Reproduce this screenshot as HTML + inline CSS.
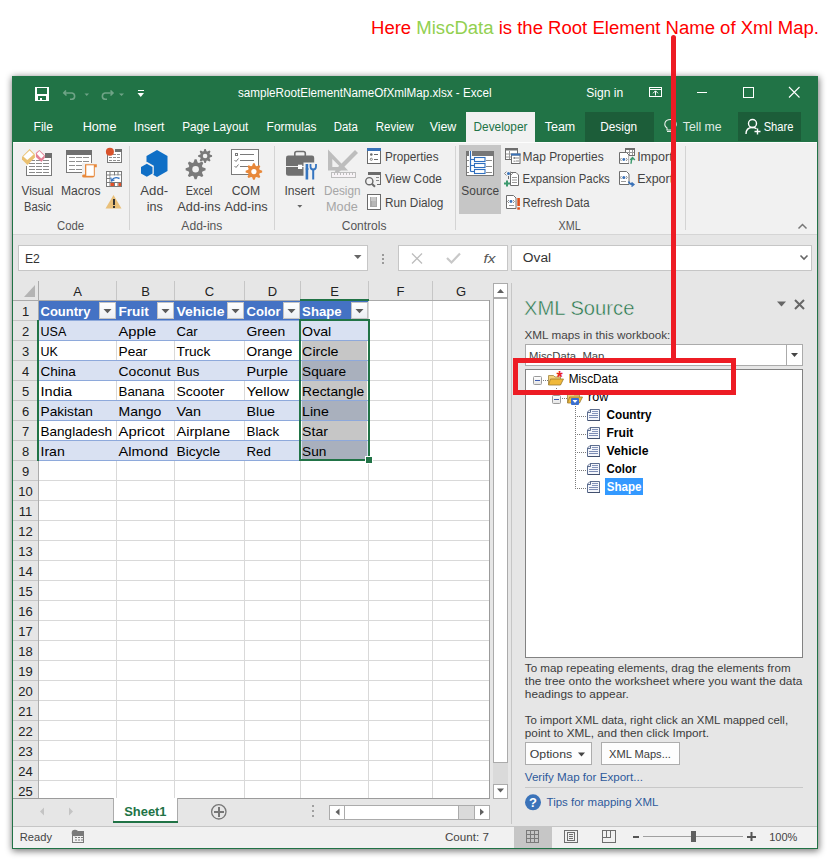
<!DOCTYPE html>
<html><head><meta charset="utf-8"><style>
html,body{margin:0;padding:0;background:#fff;width:835px;height:862px;overflow:hidden}
svg{display:block}
text{font-family:"Liberation Sans",sans-serif;white-space:pre}
</style></head><body>
<svg width="835" height="862" viewBox="0 0 835 862">
<defs><linearGradient id="mbox" x1="0" y1="0" x2="0" y2="1"><stop offset="0" stop-color="#ffffff"/><stop offset="1" stop-color="#e4e4e4"/></linearGradient><linearGradient id="fbtn" x1="0" y1="0" x2="0" y2="1"><stop offset="0" stop-color="#ffffff"/><stop offset="1" stop-color="#eceff3"/></linearGradient><filter id="sh" x="-5%" y="-5%" width="110%" height="110%"><feGaussianBlur stdDeviation="3.5"/></filter></defs>
<rect x="12" y="77" width="807" height="774" fill="#000" opacity="0.55" filter="url(#sh)"/>
<rect x="12" y="76" width="806" height="773" fill="#f1f1f1" />
<rect x="12" y="76" width="806" height="66" fill="#217346" />
<rect x="13" y="142" width="804" height="92" fill="#f1f1f1" />
<rect x="13" y="142" width="804" height="1" fill="#fdfdfd" />
<rect x="13" y="234" width="804" height="1" fill="#d5d5d5" />
<rect x="13" y="235" width="804" height="46" fill="#e6e6e6" />
<rect x="35" y="87" width="14" height="14" fill="#fff" />
<rect x="37" y="88" width="10" height="6" fill="#217346" />
<rect x="38" y="96" width="8" height="4" fill="#217346" />
<rect x="40" y="98" width="2" height="2" fill="#fff" />
<path d="M66 90.5 L63.8 93 L66.5 95.5 M64.5 93 H72 A3.2 3.2 0 0 1 72 99.3 H70" fill="none" stroke="#6fa487" stroke-width="1.6" />
<path d="M84.5 93.5 L89 93.5 L86.75 96 Z" fill="#6fa487" stroke="none" stroke-width="1" />
<path d="M110.5 90.5 L113 93 L110.5 95.5 M112.5 93 H105 A3.2 3.2 0 0 0 105 99.3 H107" fill="none" stroke="#6fa487" stroke-width="1.6" />
<path d="M119 93.5 L124 93.5 L121.5 96 Z" fill="#6fa487" stroke="none" stroke-width="1" />
<rect x="138" y="90" width="6" height="1" fill="#fff" />
<path d="M137.5 93 L144 93 L140.75 97 Z" fill="#fff" stroke="none" stroke-width="1" />
<text x="238" y="96.8" font-size="12.5" fill="#fff" textLength="253.5" lengthAdjust="spacingAndGlyphs" >sampleRootElementNameOfXmlMap.xlsx - Excel</text>
<text x="586.25" y="96.8" font-size="12.5" fill="#fff" textLength="36.9" lengthAdjust="spacingAndGlyphs" >Sign in</text>
<rect x="649" y="87" width="13" height="1" fill="#fff" />
<rect x="649" y="87" width="1" height="10" fill="#fff" />
<rect x="661" y="87" width="1" height="10" fill="#fff" />
<rect x="649" y="96" width="13" height="1" fill="#fff" />
<rect x="649" y="89" width="13" height="1" fill="#fff" />
<path d="M655.5 95.5 V91 M653 93.3 L655.5 90.8 L658 93.3" fill="none" stroke="#fff" stroke-width="1" />
<rect x="697" y="92" width="10" height="1" fill="#fff" />
<rect x="743" y="87" width="11" height="1" fill="#fff" />
<rect x="743" y="87" width="1" height="11" fill="#fff" />
<rect x="753" y="87" width="1" height="11" fill="#fff" />
<rect x="743" y="97" width="11" height="1" fill="#fff" />
<path d="M789 87 L799.5 97.5 M799.5 87 L789 97.5" fill="none" stroke="#fff" stroke-width="1.1" />
<rect x="466" y="112" width="69" height="30" fill="#f1f1f1" />
<rect x="585" y="112" width="69" height="30" fill="#1c5d39" />
<rect x="738" y="112" width="63" height="29" fill="#1c5d39" />
<text x="33.55" y="130.8" font-size="12.5" fill="#fff" textLength="19.4" lengthAdjust="spacingAndGlyphs" >File</text>
<text x="82.65" y="130.8" font-size="12.5" fill="#fff" textLength="33.8" lengthAdjust="spacingAndGlyphs" >Home</text>
<text x="133.85" y="130.8" font-size="12.5" fill="#fff" textLength="30.5" lengthAdjust="spacingAndGlyphs" >Insert</text>
<text x="182.15" y="130.8" font-size="12.5" fill="#fff" textLength="66.2" lengthAdjust="spacingAndGlyphs" >Page Layout</text>
<text x="266.55" y="130.8" font-size="12.5" fill="#fff" textLength="50.0" lengthAdjust="spacingAndGlyphs" >Formulas</text>
<text x="333.75" y="130.8" font-size="12.5" fill="#fff" textLength="24.1" lengthAdjust="spacingAndGlyphs" >Data</text>
<text x="375.75" y="130.8" font-size="12.5" fill="#fff" textLength="37.8" lengthAdjust="spacingAndGlyphs" >Review</text>
<text x="429.65" y="130.8" font-size="12.5" fill="#fff" textLength="26.7" lengthAdjust="spacingAndGlyphs" >View</text>
<text x="544.75" y="130.8" font-size="12.5" fill="#fff" textLength="30.5" lengthAdjust="spacingAndGlyphs" >Team</text>
<text x="600.25" y="130.8" font-size="12.5" fill="#fff" textLength="36.8" lengthAdjust="spacingAndGlyphs" >Design</text>
<text x="763.65" y="130.8" font-size="12.5" fill="#fff" textLength="29.8" lengthAdjust="spacingAndGlyphs" >Share</text>
<text x="473.55" y="130.8" font-size="12.5" fill="#217346" textLength="53.9" lengthAdjust="spacingAndGlyphs" >Developer</text>
<text x="682.75" y="130.8" font-size="12.5" fill="#dfeae3" textLength="38.9" lengthAdjust="spacingAndGlyphs" >Tell me</text>
<path d="M667 128 C663.5 125.5 664 119.5 670.5 119.5 C677 119.5 677.5 125.5 674 128 V130 H667 Z" fill="none" stroke="#e8efe9" stroke-width="1.1" />
<rect x="667" y="131" width="7" height="1" fill="#e8efe9" />
<circle cx="752.5" cy="123.5" r="4" fill="none" stroke="#fff" stroke-width="1.4"/>
<path d="M746 134 C746 129.5 749 127.5 752.5 127.5 C754 127.5 755.5 128 756.5 128.8" fill="none" stroke="#fff" stroke-width="1.4" />
<path d="M757.5 128.5 V134.5 M754.5 131.5 H760.5" fill="none" stroke="#fff" stroke-width="1.4" />
<rect x="129" y="146" width="1" height="84" fill="#d4d4d4" />
<rect x="274" y="146" width="1" height="84" fill="#d4d4d4" />
<rect x="455" y="146" width="1" height="84" fill="#d4d4d4" />
<rect x="685" y="146" width="1" height="84" fill="#d4d4d4" />
<text x="57.05" y="230" font-size="12.5" fill="#555" textLength="27.1" lengthAdjust="spacingAndGlyphs" >Code</text>
<text x="181.35" y="229.5" font-size="12.5" fill="#555" textLength="41.0" lengthAdjust="spacingAndGlyphs" >Add-ins</text>
<text x="341.75" y="229.5" font-size="12.5" fill="#555" textLength="44.7" lengthAdjust="spacingAndGlyphs" >Controls</text>
<text x="558.45" y="229.7" font-size="12.5" fill="#555" textLength="22.2" lengthAdjust="spacingAndGlyphs" >XML</text>
<path d="M798.5 228.5 L802.5 224.5 L806.5 228.5" fill="none" stroke="#777" stroke-width="1.5" />
<rect x="26" y="166" width="1" height="10" fill="#7a7a7a" />
<rect x="26" y="175" width="26" height="1" fill="#7a7a7a" />
<rect x="51" y="153" width="1" height="23" fill="#7a7a7a" />
<rect x="27" y="154" width="24" height="21" fill="#fff" />
<rect x="45" y="153" width="7" height="5" fill="#6e6e6e" />
<rect x="29" y="160" width="6" height="1" fill="#8a8a8a" />
<rect x="36" y="160" width="6" height="1" fill="#8a8a8a" />
<rect x="43" y="160" width="6" height="1" fill="#8a8a8a" />
<rect x="29" y="163" width="6" height="1" fill="#8a8a8a" />
<rect x="36" y="163" width="6" height="1" fill="#8a8a8a" />
<rect x="43" y="163" width="6" height="1" fill="#8a8a8a" />
<rect x="29" y="166" width="6" height="1" fill="#8a8a8a" />
<rect x="36" y="166" width="6" height="1" fill="#8a8a8a" />
<rect x="43" y="166" width="6" height="1" fill="#8a8a8a" />
<rect x="29" y="169" width="6" height="1" fill="#8a8a8a" />
<rect x="36" y="169" width="6" height="1" fill="#8a8a8a" />
<rect x="43" y="169" width="6" height="1" fill="#8a8a8a" />
<rect x="29" y="172" width="6" height="1" fill="#8a8a8a" />
<rect x="36" y="172" width="6" height="1" fill="#8a8a8a" />
<rect x="43" y="172" width="6" height="1" fill="#8a8a8a" />
<path d="M29.6 149.1 L34.9 154.6 L34.9 157.6 L27.5 164.9 L22 159.4 L22 156.8 Z" fill="#eac070" stroke="none" stroke-width="1" />
<path d="M29.6 150.6 L33.6 154.6 L27.3 160 L23.3 156.4 Z" fill="#fff" stroke="none" stroke-width="1" />
<path d="M39.3 149.9 L44.8 155.2 L44.8 157.8 L41.4 162.1 L35.9 157 L35.9 153.1 Z" fill="#e57f94" stroke="none" stroke-width="1" />
<path d="M39.3 150.9 L44 155.8 L41.2 158.4 L36.7 153.7 Z" fill="#fff" stroke="none" stroke-width="1" />
<text x="21.55" y="194.9" font-size="12.5" fill="#444" textLength="31.7" lengthAdjust="spacingAndGlyphs" >Visual</text>
<text x="24.05" y="211.2" font-size="12.5" fill="#444" textLength="27.3" lengthAdjust="spacingAndGlyphs" >Basic</text>
<rect x="66" y="150" width="26" height="23" fill="#7a7a7a" />
<rect x="67" y="155" width="24" height="17" fill="#fff" />
<rect x="66" y="150" width="26" height="5" fill="#707070" />
<rect x="69" y="157" width="6" height="1" fill="#8f8f8f" />
<rect x="76" y="157" width="6" height="1" fill="#8f8f8f" />
<rect x="83" y="157" width="6" height="1" fill="#8f8f8f" />
<rect x="69" y="161" width="6" height="1" fill="#8f8f8f" />
<rect x="76" y="161" width="6" height="1" fill="#8f8f8f" />
<rect x="83" y="161" width="6" height="1" fill="#8f8f8f" />
<rect x="69" y="165" width="6" height="1" fill="#8f8f8f" />
<rect x="76" y="165" width="6" height="1" fill="#8f8f8f" />
<rect x="83" y="165" width="6" height="1" fill="#8f8f8f" />
<rect x="69" y="169" width="6" height="1" fill="#8f8f8f" />
<rect x="76" y="169" width="6" height="1" fill="#8f8f8f" />
<rect x="83" y="169" width="6" height="1" fill="#8f8f8f" />
<rect x="82" y="163" width="16" height="16" fill="#f1f1f1" />
<path d="M85 164.2 H96.8 V167.2 H94.8 V175.5 Q94.8 177.6 92.6 177.6 H84 Q82.1 177.6 82.1 176 Q82.1 174.6 84 174.6 H85 Z" fill="#e8883a" stroke="none" stroke-width="1" />
<rect x="86.3" y="165.3" width="7.5" height="10.5" fill="#fff" />
<text x="60.95" y="194.9" font-size="12.5" fill="#444" textLength="39.7" lengthAdjust="spacingAndGlyphs" >Macros</text>
<rect x="107" y="162" width="15" height="1" fill="#7a7a7a" />
<rect x="121" y="149" width="1" height="14" fill="#7a7a7a" />
<rect x="107" y="155" width="1" height="8" fill="#7a7a7a" />
<rect x="108" y="152" width="13" height="10" fill="#fff" />
<rect x="115" y="149" width="7" height="3" fill="#707070" />
<rect x="109" y="154" width="3" height="1" fill="#8f8f8f" />
<rect x="113" y="154" width="3" height="1" fill="#8f8f8f" />
<rect x="117" y="154" width="3" height="1" fill="#8f8f8f" />
<rect x="109" y="157" width="3" height="1" fill="#8f8f8f" />
<rect x="113" y="157" width="3" height="1" fill="#8f8f8f" />
<rect x="117" y="157" width="3" height="1" fill="#8f8f8f" />
<rect x="109" y="160" width="3" height="1" fill="#8f8f8f" />
<rect x="113" y="160" width="3" height="1" fill="#8f8f8f" />
<rect x="117" y="160" width="3" height="1" fill="#8f8f8f" />
<circle cx="109.9" cy="151.7" r="4" fill="#d9522b"/>
<rect x="106" y="171" width="16" height="16" fill="#7a7a7a" />
<rect x="107" y="172" width="14" height="14" fill="#fff" />
<rect x="109.5" y="171" width="1" height="16" fill="#7a7a7a" />
<rect x="114" y="171" width="1" height="16" fill="#7a7a7a" />
<rect x="117.5" y="171" width="1" height="16" fill="#7a7a7a" />
<rect x="106" y="174.5" width="16" height="1" fill="#7a7a7a" />
<rect x="106" y="178" width="16" height="1" fill="#7a7a7a" />
<rect x="106" y="182" width="16" height="1" fill="#7a7a7a" />
<rect x="110.5" y="175.5" width="10.5" height="6.5" fill="#fff" />
<rect x="110.5" y="183" width="3.5" height="3" fill="#e0502a" />
<rect x="118.5" y="183" width="2.5" height="3" fill="#e0502a" />
<path d="M112 180 Q114.5 176.2 119.5 178.5" fill="none" stroke="#2f6fbf" stroke-width="1.4" />
<path d="M110.8 177.5 L111.5 181 L114.5 180" fill="none" stroke="#2f6fbf" stroke-width="1.2" />
<path d="M113.5 195 L121.5 208.5 L105.5 208.5 Z" fill="#e9c07a" stroke="none" stroke-width="1" />
<rect x="113" y="199" width="2" height="6" fill="#333" />
<rect x="113" y="206" width="2" height="2" fill="#333" />
<path d="M157 150 L167.5 156 L167.5 171 L157 177 L146.5 171 L146.5 156 Z" fill="#0f6fc6" stroke="none" stroke-width="1" />
<path d="M146.8 161.8 L153.8 165.8 L153.8 174.2 L146.8 178.2 L139.8 174.2 L139.8 165.8 Z" fill="#f1f1f1" stroke="none" stroke-width="1" />
<path d="M146.8 163.8 L152.5 167 L152.5 173.5 L146.8 176.8 L141 173.5 L141 167 Z" fill="#0f6fc6" stroke="none" stroke-width="1" />
<text x="140.35" y="195" font-size="12.5" fill="#444" textLength="27.8" lengthAdjust="spacingAndGlyphs" >Add-</text>
<text x="146.65" y="211.4" font-size="12.5" fill="#444" textLength="16.1" lengthAdjust="spacingAndGlyphs" >ins</text>
<path d="M194.62 159.35 L196.58 159.35 L197.69 162.41 L198.99 162.95 L201.94 161.57 L203.33 162.96 L201.95 165.91 L202.49 167.21 L205.55 168.32 L205.55 170.28 L202.49 171.39 L201.95 172.69 L203.33 175.64 L201.94 177.03 L198.99 175.65 L197.69 176.19 L196.58 179.25 L194.62 179.25 L193.51 176.19 L192.21 175.65 L189.26 177.03 L187.87 175.64 L189.25 172.69 L188.71 171.39 L185.65 170.28 L185.65 168.32 L188.71 167.21 L189.25 165.91 L187.87 162.96 L189.26 161.57 L192.21 162.95 L193.51 162.41 Z" fill="#7a7a7a" stroke="none" stroke-width="1" />
<circle cx="195.6" cy="169.3" r="3.3" fill="#f1f1f1"/>
<path d="M204.41 149.03 L205.79 149.03 L206.55 151.22 L207.46 151.59 L209.54 150.59 L210.51 151.56 L209.51 153.64 L209.88 154.55 L212.07 155.31 L212.07 156.69 L209.88 157.45 L209.51 158.36 L210.51 160.44 L209.54 161.41 L207.46 160.41 L206.55 160.78 L205.79 162.97 L204.41 162.97 L203.65 160.78 L202.74 160.41 L200.66 161.41 L199.69 160.44 L200.69 158.36 L200.32 157.45 L198.13 156.69 L198.13 155.31 L200.32 154.55 L200.69 153.64 L199.69 151.56 L200.66 150.59 L202.74 151.59 L203.65 151.22 Z" fill="#7a7a7a" stroke="none" stroke-width="1" />
<circle cx="205.1" cy="156" r="2.3" fill="#f1f1f1"/>
<text x="185.85" y="195" font-size="12.5" fill="#444" textLength="26.6" lengthAdjust="spacingAndGlyphs" >Excel</text>
<text x="177.35" y="211.4" font-size="12.5" fill="#444" textLength="43.2" lengthAdjust="spacingAndGlyphs" >Add-ins</text>
<rect x="231" y="149" width="28" height="26" fill="#7a7a7a" />
<rect x="232" y="150" width="26" height="24" fill="#fff" />
<rect x="235" y="153" width="3" height="3" fill="#7a7a7a" />
<rect x="236" y="154" width="1" height="1" fill="#fff" />
<rect x="240" y="154" width="14" height="1" fill="#7a7a7a" />
<rect x="240" y="160" width="14" height="1" fill="#7a7a7a" />
<rect x="240" y="166" width="8" height="1" fill="#7a7a7a" />
<path d="M234.5 160 L236 161.5 L238.5 158.5" fill="none" stroke="#7a7a7a" stroke-width="1" />
<path d="M234.5 166 L236 167.5 L238.5 164.5" fill="none" stroke="#7a7a7a" stroke-width="1" />
<path d="M253.09 163.34 L254.71 163.34 L255.64 165.86 L256.73 166.31 L259.17 165.18 L260.32 166.33 L259.19 168.77 L259.64 169.86 L262.16 170.79 L262.16 172.41 L259.64 173.34 L259.19 174.43 L260.32 176.87 L259.17 178.02 L256.73 176.89 L255.64 177.34 L254.71 179.86 L253.09 179.86 L252.16 177.34 L251.07 176.89 L248.63 178.02 L247.48 176.87 L248.61 174.43 L248.16 173.34 L245.64 172.41 L245.64 170.79 L248.16 169.86 L248.61 168.77 L247.48 166.33 L248.63 165.18 L251.07 166.31 L252.16 165.86 Z" fill="#e8883a" stroke="none" stroke-width="1" />
<circle cx="253.9" cy="171.6" r="2.6" fill="#fff"/>
<text x="231.65" y="195" font-size="12.5" fill="#444" textLength="28.4" lengthAdjust="spacingAndGlyphs" >COM</text>
<text x="224.45" y="211.4" font-size="12.5" fill="#444" textLength="43.2" lengthAdjust="spacingAndGlyphs" >Add-ins</text>
<rect x="294.8" y="151.5" width="10.5" height="6" rx="2" fill="none" stroke="#707070" stroke-width="1.6"/>
<rect x="286" y="155.6" width="28.2" height="20.1" rx="2.2" fill="#707070"/>
<rect x="286" y="166" width="18" height="1" fill="#f1f1f1" />
<rect x="298" y="164.7" width="4.2" height="4.3" fill="#fff" />
<rect x="303.5" y="162.5" width="14" height="18" fill="#f1f1f1" />
<path d="M306.9 164 V168 M306.9 170 V179.5" fill="none" stroke="#3575c0" stroke-width="2.6" />
<rect x="305.5" y="168" width="3" height="2" fill="#3575c0" />
<path d="M313.2 169 V179.5" fill="none" stroke="#3575c0" stroke-width="2" />
<path d="M310.5 164 V166.5 Q310.5 169.5 313.2 169.5 Q316 169.5 316 166.5 V164" fill="none" stroke="#3575c0" stroke-width="1.8" />
<text x="284.45" y="194.8" font-size="12.5" fill="#444" textLength="30.2" lengthAdjust="spacingAndGlyphs" >Insert</text>
<path d="M297.3 205 L302.3 205 L299.8 207.8 Z" fill="#666" stroke="none" stroke-width="1" />
<path d="M328 149.4 V170.4 H348.1 Z M332.3 159 V167 H340.3 Z" fill="#bdbdbd" stroke="none" stroke-width="1" fill-rule="evenodd"/>
<path d="M335.6 169.5 L355 150 L358 153 L338.6 172.5 L334.5 173.5 Z" fill="#bdbdbd" stroke="none" stroke-width="1" />
<rect x="331" y="172" width="25" height="6" fill="#bdbdbd" />
<rect x="332" y="173" width="23" height="4" fill="#f7f3f6" />
<rect x="334" y="173" width="1" height="2" fill="#bdbdbd" />
<rect x="337" y="173" width="1" height="2" fill="#bdbdbd" />
<rect x="340" y="173" width="1" height="2" fill="#bdbdbd" />
<rect x="343" y="173" width="1" height="2" fill="#bdbdbd" />
<rect x="346" y="173" width="1" height="2" fill="#bdbdbd" />
<rect x="349" y="173" width="1" height="2" fill="#bdbdbd" />
<rect x="352" y="173" width="1" height="2" fill="#bdbdbd" />
<text x="323.95" y="194.8" font-size="12.5" fill="#a6a6a6" textLength="36.6" lengthAdjust="spacingAndGlyphs" >Design</text>
<text x="326.05" y="210.8" font-size="12.5" fill="#a6a6a6" textLength="31.7" lengthAdjust="spacingAndGlyphs" >Mode</text>
<rect x="367" y="148" width="14" height="16" fill="#6a6a6a" />
<rect x="368" y="151" width="12" height="12" fill="#fff" />
<rect x="367" y="148" width="14" height="3" fill="#3a72b8" />
<circle cx="371.3" cy="154.5" r="1.3" fill="#6a6a6a"/><circle cx="371.3" cy="159.3" r="1.1" fill="none" stroke="#6a6a6a" stroke-width="0.8"/>
<rect x="374" y="154" width="4" height="1" fill="#6a6a6a" />
<rect x="374" y="159" width="4" height="1" fill="#6a6a6a" />
<text x="384.95" y="161" font-size="12.5" fill="#444" textLength="53.6" lengthAdjust="spacingAndGlyphs" >Properties</text>
<rect x="368" y="172" width="13" height="3" fill="#6a6a6a" />
<rect x="380" y="172" width="1" height="13" fill="#6a6a6a" />
<rect x="377" y="184" width="4" height="1" fill="#6a6a6a" />
<rect x="376" y="177" width="3" height="1" fill="#8a8a8a" />
<rect x="376" y="180" width="3" height="1" fill="#8a8a8a" />
<circle cx="369.3" cy="181.2" r="3.6" fill="none" stroke="#6a6a6a" stroke-width="1.4"/>
<path d="M371.8 183.8 L375 186.8" fill="none" stroke="#6a6a6a" stroke-width="2" />
<text x="384.95" y="183.4" font-size="12.5" fill="#444" textLength="56.9" lengthAdjust="spacingAndGlyphs" >View Code</text>
<rect x="367" y="194" width="14" height="16" fill="#6a6a6a" />
<rect x="368" y="195" width="12" height="14" fill="#fff" />
<rect x="370" y="197" width="7" height="10" fill="#a8a8a8" />
<rect x="371" y="197" width="5" height="4" fill="#c8c8c8" />
<rect x="372" y="201" width="4" height="5" fill="#b8b8b8" />
<text x="384.95" y="206.7" font-size="12.5" fill="#444" textLength="58.4" lengthAdjust="spacingAndGlyphs" >Run Dialog</text>
<rect x="459" y="145" width="42" height="69" fill="#c6c6c6" />
<rect x="466" y="151" width="28" height="25" fill="#777" />
<rect x="467" y="156" width="26" height="19" fill="#fff" />
<rect x="469" y="151" width="3" height="5" fill="#fff" />
<path d="M470.5 151 V171.5" fill="none" stroke="#2f6fbf" stroke-width="1.2" />
<rect x="474.5" y="157.5" width="10.5" height="4" fill="#fff" stroke="#2f6fbf" stroke-width="1.1"/>
<path d="M470.5 159.5 H474.5" fill="none" stroke="#2f6fbf" stroke-width="1.1" />
<rect x="467" y="160.0" width="2" height="1" fill="#8a8a8a" />
<rect x="486" y="160.0" width="6" height="1" fill="#8a8a8a" />
<rect x="474.5" y="163.5" width="10.5" height="4" fill="#fff" stroke="#2f6fbf" stroke-width="1.1"/>
<path d="M470.5 165.5 H474.5" fill="none" stroke="#2f6fbf" stroke-width="1.1" />
<rect x="467" y="166.0" width="2" height="1" fill="#8a8a8a" />
<rect x="486" y="166.0" width="6" height="1" fill="#8a8a8a" />
<rect x="474.5" y="169.5" width="10.5" height="4" fill="#fff" stroke="#2f6fbf" stroke-width="1.1"/>
<path d="M470.5 171.5 H474.5" fill="none" stroke="#2f6fbf" stroke-width="1.1" />
<rect x="467" y="172.0" width="2" height="1" fill="#8a8a8a" />
<rect x="486" y="172.0" width="6" height="1" fill="#8a8a8a" />
<text x="461.35" y="195.2" font-size="12.5" fill="#444" textLength="37.7" lengthAdjust="spacingAndGlyphs" >Source</text>
<rect x="505" y="148" width="13" height="12" fill="#6e6e6e" />
<rect x="506" y="150.5" width="11" height="8.5" fill="#fff" />
<rect x="509" y="151" width="1" height="8" fill="#9a9a9a" />
<rect x="506" y="153.5" width="5" height="1" fill="#9a9a9a" />
<rect x="506" y="156.5" width="5" height="1" fill="#9a9a9a" />
<rect x="511" y="153.5" width="9.5" height="10.5" fill="#6e6e6e" />
<rect x="512" y="155.5" width="7.5" height="7.5" fill="#fff" />
<rect x="511" y="153.5" width="9.5" height="2" fill="#3a72b8" />
<rect x="513.5" y="157" width="2" height="2" fill="#8a8a8a" />
<rect x="516" y="157.5" width="3" height="1" fill="#8a8a8a" />
<rect x="513.5" y="160.5" width="2" height="1.5" fill="#b0b0b0" />
<rect x="516" y="160.5" width="3" height="1" fill="#8a8a8a" />
<text x="522.55" y="160.7" font-size="12.5" fill="#444" textLength="81.1" lengthAdjust="spacingAndGlyphs" >Map Properties</text>
<path d="M510.5 172.5 H516 L518.5 175 V185.5 H510.5 Z" fill="#fff" stroke="#6e6e6e" stroke-width="1" />
<rect x="512" y="177.0" width="5" height="1" fill="#9a9a9a" />
<rect x="512" y="179.5" width="5" height="1" fill="#9a9a9a" />
<rect x="512" y="182.0" width="5" height="1" fill="#9a9a9a" />
<path d="M506.5 171.5 L504.5 173.5 L506.5 175.5 M510.5 171.5 L512.5 173.5 L510.5 175.5" fill="none" stroke="#6e6e6e" stroke-width="0.8" />
<circle cx="508.5" cy="173.5" r="1.5" fill="#3a72b8"/>
<rect x="508" y="176" width="1" height="3" fill="#6e6e6e" />
<path d="M507 180.5 V186.5 M504 183.5 H510" fill="none" stroke="#3d9a6e" stroke-width="2" />
<text x="522.55" y="183.4" font-size="12.5" fill="#444" textLength="87.2" lengthAdjust="spacingAndGlyphs" >Expansion Packs</text>
<path d="M506.5 195.5 H513.5 L516 198 V208.5 H506.5 Z" fill="#fff" stroke="#6e6e6e" stroke-width="1" />
<path d="M509 200 L507.5 201.5 L509 203 M513 200 L514.5 201.5 L513 203" fill="none" stroke="#6e6e6e" stroke-width="0.8" />
<circle cx="511" cy="201.5" r="1.4" fill="#3a72b8"/>
<rect x="509" y="205" width="5" height="1" fill="#9a9a9a" />
<rect x="517.3" y="198" width="2.6" height="8" fill="#e0501c" />
<rect x="517.3" y="207.3" width="2.6" height="2.4" fill="#e0501c" />
<text x="522.55" y="206.7" font-size="12.5" fill="#444" textLength="67.0" lengthAdjust="spacingAndGlyphs" >Refresh Data</text>
<rect x="625" y="148" width="10" height="8" fill="#6e6e6e" />
<rect x="626" y="150" width="8" height="5" fill="#fff" />
<rect x="626" y="152" width="8" height="1" fill="#9a9a9a" />
<rect x="629" y="150" width="1" height="5" fill="#9a9a9a" />
<rect x="632" y="150" width="1" height="5" fill="#9a9a9a" />
<path d="M619.5 152.5 H626.5 L629 155 V163.5 H619.5 Z" fill="#fff" stroke="#6e6e6e" stroke-width="1" />
<path d="M621.5 158 L620.3 159.5 L621.5 161 M626 158 L627.2 159.5 L626 161" fill="none" stroke="#6e6e6e" stroke-width="0.8" />
<circle cx="623.8" cy="159.5" r="1.4" fill="#3a72b8"/>
<rect x="629" y="156" width="7" height="9" fill="#f1f1f1" />
<path d="M631 163.8 Q631 160 632.5 158.5 M630.3 160 L632.5 157.5 L634.8 160" fill="none" stroke="#3d9a6e" stroke-width="1.5" />
<text x="637.15" y="160.7" font-size="12.5" fill="#444" textLength="35.5" lengthAdjust="spacingAndGlyphs" >Import</text>
<path d="M619.5 171.5 H626.5 L629 174 V184.5 H619.5 Z" fill="#fff" stroke="#6e6e6e" stroke-width="1" />
<path d="M621.5 176 L620.3 177.5 L621.5 179 M626 176 L627.2 177.5 L626 179" fill="none" stroke="#6e6e6e" stroke-width="0.8" />
<circle cx="623.8" cy="177.5" r="1.5" fill="#3a72b8"/>
<rect x="621" y="181" width="5" height="1" fill="#9a9a9a" />
<rect x="629.5" y="182" width="6" height="6" fill="#f1f1f1" />
<path d="M628.5 181.5 Q629.5 184.5 633 184.5 M631.5 182.5 L633.8 184.5 L631.5 186.5" fill="none" stroke="#3a72b8" stroke-width="1.6" />
<text x="637.15" y="183.4" font-size="12.5" fill="#444" textLength="36.0" lengthAdjust="spacingAndGlyphs" >Export</text>
<rect x="18" y="245" width="350" height="26" fill="#c6c6c6" />
<rect x="19" y="246" width="348" height="24" fill="#fff" />
<text x="24.95" y="263" font-size="12.5" fill="#333" textLength="14.9" lengthAdjust="spacingAndGlyphs" >E2</text>
<path d="M354 255 L361.5 255 L357.75 259 Z" fill="#666" stroke="none" stroke-width="1" />
<rect x="382" y="254" width="2" height="2" fill="#9a9a9a" />
<rect x="382" y="258" width="2" height="2" fill="#9a9a9a" />
<rect x="382" y="262" width="2" height="2" fill="#9a9a9a" />
<rect x="398" y="245" width="110" height="26" fill="#c6c6c6" />
<rect x="399" y="246" width="108" height="24" fill="#fff" />
<path d="M412 253.5 L422 263.5 M422 253.5 L412 263.5" fill="none" stroke="#bdbdbd" stroke-width="1.3" />
<path d="M447 258 L451.5 262.5 L460 253.5" fill="none" stroke="#c8c8c8" stroke-width="2.2" />
<text x="483.5" y="263" font-size="13" font-family="Liberation Serif" font-style="italic" fill="#555" textLength="12" lengthAdjust="spacingAndGlyphs">fx</text>
<rect x="511" y="245" width="301" height="26" fill="#c6c6c6" />
<rect x="512" y="246" width="299" height="24" fill="#fff" />
<text x="522.85" y="262.3" font-size="12.5" fill="#333" textLength="28.3" lengthAdjust="spacingAndGlyphs" >Oval</text>
<path d="M800.5 255.5 L804 259 L807.5 255.5" fill="none" stroke="#666" stroke-width="1.6" />
<rect x="13" y="281" width="499" height="545" fill="#e6e6e6" />
<rect x="13" y="281" width="476" height="517" fill="#ffffff" />
<rect x="13" y="281" width="476" height="19" fill="#e6e6e6" />
<rect x="13" y="300" width="25" height="498" fill="#e6e6e6" />
<rect x="39" y="300" width="450" height="1" fill="#d9d9d9" />
<rect x="39" y="320" width="450" height="1" fill="#d9d9d9" />
<rect x="39" y="340" width="450" height="1" fill="#d9d9d9" />
<rect x="39" y="360" width="450" height="1" fill="#d9d9d9" />
<rect x="39" y="380" width="450" height="1" fill="#d9d9d9" />
<rect x="39" y="400" width="450" height="1" fill="#d9d9d9" />
<rect x="39" y="420" width="450" height="1" fill="#d9d9d9" />
<rect x="39" y="440" width="450" height="1" fill="#d9d9d9" />
<rect x="39" y="460" width="450" height="1" fill="#d9d9d9" />
<rect x="39" y="480" width="450" height="1" fill="#d9d9d9" />
<rect x="39" y="500" width="450" height="1" fill="#d9d9d9" />
<rect x="39" y="520" width="450" height="1" fill="#d9d9d9" />
<rect x="39" y="540" width="450" height="1" fill="#d9d9d9" />
<rect x="39" y="560" width="450" height="1" fill="#d9d9d9" />
<rect x="39" y="580" width="450" height="1" fill="#d9d9d9" />
<rect x="39" y="600" width="450" height="1" fill="#d9d9d9" />
<rect x="39" y="620" width="450" height="1" fill="#d9d9d9" />
<rect x="39" y="640" width="450" height="1" fill="#d9d9d9" />
<rect x="39" y="660" width="450" height="1" fill="#d9d9d9" />
<rect x="39" y="680" width="450" height="1" fill="#d9d9d9" />
<rect x="39" y="700" width="450" height="1" fill="#d9d9d9" />
<rect x="39" y="720" width="450" height="1" fill="#d9d9d9" />
<rect x="39" y="740" width="450" height="1" fill="#d9d9d9" />
<rect x="39" y="760" width="450" height="1" fill="#d9d9d9" />
<rect x="39" y="780" width="450" height="1" fill="#d9d9d9" />
<rect x="116" y="300" width="1" height="498" fill="#d9d9d9" />
<rect x="174" y="300" width="1" height="498" fill="#d9d9d9" />
<rect x="244" y="300" width="1" height="498" fill="#d9d9d9" />
<rect x="300" y="300" width="1" height="498" fill="#d9d9d9" />
<rect x="368" y="300" width="1" height="498" fill="#d9d9d9" />
<rect x="432" y="300" width="1" height="498" fill="#d9d9d9" />
<rect x="116" y="281" width="1" height="19" fill="#c6c6c6" />
<rect x="174" y="281" width="1" height="19" fill="#c6c6c6" />
<rect x="244" y="281" width="1" height="19" fill="#c6c6c6" />
<rect x="300" y="281" width="1" height="19" fill="#c6c6c6" />
<rect x="368" y="281" width="1" height="19" fill="#c6c6c6" />
<rect x="432" y="281" width="1" height="19" fill="#c6c6c6" />
<rect x="38" y="281" width="1" height="517" fill="#ababab" />
<rect x="13" y="300" width="476" height="1" fill="#ababab" />
<rect x="13" y="320" width="25" height="1" fill="#c6c6c6" />
<rect x="13" y="340" width="25" height="1" fill="#c6c6c6" />
<rect x="13" y="360" width="25" height="1" fill="#c6c6c6" />
<rect x="13" y="380" width="25" height="1" fill="#c6c6c6" />
<rect x="13" y="400" width="25" height="1" fill="#c6c6c6" />
<rect x="13" y="420" width="25" height="1" fill="#c6c6c6" />
<rect x="13" y="440" width="25" height="1" fill="#c6c6c6" />
<rect x="13" y="460" width="25" height="1" fill="#c6c6c6" />
<rect x="13" y="480" width="25" height="1" fill="#c6c6c6" />
<rect x="13" y="500" width="25" height="1" fill="#c6c6c6" />
<rect x="13" y="520" width="25" height="1" fill="#c6c6c6" />
<rect x="13" y="540" width="25" height="1" fill="#c6c6c6" />
<rect x="13" y="560" width="25" height="1" fill="#c6c6c6" />
<rect x="13" y="580" width="25" height="1" fill="#c6c6c6" />
<rect x="13" y="600" width="25" height="1" fill="#c6c6c6" />
<rect x="13" y="620" width="25" height="1" fill="#c6c6c6" />
<rect x="13" y="640" width="25" height="1" fill="#c6c6c6" />
<rect x="13" y="660" width="25" height="1" fill="#c6c6c6" />
<rect x="13" y="680" width="25" height="1" fill="#c6c6c6" />
<rect x="13" y="700" width="25" height="1" fill="#c6c6c6" />
<rect x="13" y="720" width="25" height="1" fill="#c6c6c6" />
<rect x="13" y="740" width="25" height="1" fill="#c6c6c6" />
<rect x="13" y="760" width="25" height="1" fill="#c6c6c6" />
<rect x="13" y="780" width="25" height="1" fill="#c6c6c6" />
<path d="M24 297 L35 297 L35 285 Z" fill="#b4b4b4" stroke="none" stroke-width="1" />
<rect x="489" y="300" width="1" height="499" fill="#9b9b9b" />
<rect x="13" y="798" width="477" height="1" fill="#9b9b9b" />
<text x="77.5" y="296" font-size="13" fill="#222" text-anchor="middle" >A</text>
<text x="145.5" y="296" font-size="13" fill="#222" text-anchor="middle" >B</text>
<text x="209.5" y="296" font-size="13" fill="#222" text-anchor="middle" >C</text>
<text x="272.5" y="296" font-size="13" fill="#222" text-anchor="middle" >D</text>
<text x="334.5" y="296" font-size="13" fill="#222" text-anchor="middle" >E</text>
<text x="400.5" y="296" font-size="13" fill="#222" text-anchor="middle" >F</text>
<text x="461.0" y="296" font-size="13" fill="#222" text-anchor="middle" >G</text>
<text x="25.5" y="316" font-size="13" fill="#222" text-anchor="middle" >1</text>
<text x="25.5" y="336" font-size="13" fill="#222" text-anchor="middle" >2</text>
<text x="25.5" y="356" font-size="13" fill="#222" text-anchor="middle" >3</text>
<text x="25.5" y="376" font-size="13" fill="#222" text-anchor="middle" >4</text>
<text x="25.5" y="396" font-size="13" fill="#222" text-anchor="middle" >5</text>
<text x="25.5" y="416" font-size="13" fill="#222" text-anchor="middle" >6</text>
<text x="25.5" y="436" font-size="13" fill="#222" text-anchor="middle" >7</text>
<text x="25.5" y="456" font-size="13" fill="#222" text-anchor="middle" >8</text>
<text x="25.5" y="476" font-size="13" fill="#222" text-anchor="middle" >9</text>
<text x="25.5" y="496" font-size="13" fill="#222" text-anchor="middle" >10</text>
<text x="25.5" y="516" font-size="13" fill="#222" text-anchor="middle" >11</text>
<text x="25.5" y="536" font-size="13" fill="#222" text-anchor="middle" >12</text>
<text x="25.5" y="556" font-size="13" fill="#222" text-anchor="middle" >13</text>
<text x="25.5" y="576" font-size="13" fill="#222" text-anchor="middle" >14</text>
<text x="25.5" y="596" font-size="13" fill="#222" text-anchor="middle" >15</text>
<text x="25.5" y="616" font-size="13" fill="#222" text-anchor="middle" >16</text>
<text x="25.5" y="636" font-size="13" fill="#222" text-anchor="middle" >17</text>
<text x="25.5" y="656" font-size="13" fill="#222" text-anchor="middle" >18</text>
<text x="25.5" y="676" font-size="13" fill="#222" text-anchor="middle" >19</text>
<text x="25.5" y="696" font-size="13" fill="#222" text-anchor="middle" >20</text>
<text x="25.5" y="716" font-size="13" fill="#222" text-anchor="middle" >21</text>
<text x="25.5" y="736" font-size="13" fill="#222" text-anchor="middle" >22</text>
<text x="25.5" y="756" font-size="13" fill="#222" text-anchor="middle" >23</text>
<text x="25.5" y="776" font-size="13" fill="#222" text-anchor="middle" >24</text>
<text x="25.5" y="796" font-size="13" fill="#222" text-anchor="middle" >25</text>
<rect x="39" y="301" width="329" height="19" fill="#4472c4" />
<rect x="39" y="321" width="329" height="19" fill="#d9e1f2" />
<rect x="39" y="320" width="329" height="1" fill="#8ea9db" />
<rect x="39" y="340" width="329" height="1" fill="#8ea9db" />
<rect x="39" y="361" width="329" height="19" fill="#d9e1f2" />
<rect x="39" y="360" width="329" height="1" fill="#8ea9db" />
<rect x="39" y="380" width="329" height="1" fill="#8ea9db" />
<rect x="39" y="401" width="329" height="19" fill="#d9e1f2" />
<rect x="39" y="400" width="329" height="1" fill="#8ea9db" />
<rect x="39" y="420" width="329" height="1" fill="#8ea9db" />
<rect x="39" y="441" width="329" height="19" fill="#d9e1f2" />
<rect x="39" y="440" width="329" height="1" fill="#8ea9db" />
<rect x="39" y="460" width="329" height="1" fill="#8ea9db" />
<rect x="302" y="341" width="65" height="19" fill="#c6c6c6" />
<rect x="302" y="361" width="65" height="19" fill="#a9b0bd" />
<rect x="302" y="381" width="65" height="19" fill="#c6c6c6" />
<rect x="302" y="401" width="65" height="19" fill="#a9b0bd" />
<rect x="302" y="421" width="65" height="19" fill="#c6c6c6" />
<rect x="302" y="441" width="65" height="19" fill="#a9b0bd" />
<rect x="99" y="302" width="17" height="17" fill="#c3c3c3" />
<rect x="100" y="303" width="15" height="15" fill="url(#fbtn)"/>
<path d="M103.5 309 L111.5 309 L107.5 313.2 Z" fill="#5a5a5a" stroke="none" stroke-width="1" />
<rect x="157" y="302" width="17" height="17" fill="#c3c3c3" />
<rect x="158" y="303" width="15" height="15" fill="url(#fbtn)"/>
<path d="M161.5 309 L169.5 309 L165.5 313.2 Z" fill="#5a5a5a" stroke="none" stroke-width="1" />
<rect x="227" y="302" width="17" height="17" fill="#c3c3c3" />
<rect x="228" y="303" width="15" height="15" fill="url(#fbtn)"/>
<path d="M231.5 309 L239.5 309 L235.5 313.2 Z" fill="#5a5a5a" stroke="none" stroke-width="1" />
<rect x="283" y="302" width="17" height="17" fill="#c3c3c3" />
<rect x="284" y="303" width="15" height="15" fill="url(#fbtn)"/>
<path d="M287.5 309 L295.5 309 L291.5 313.2 Z" fill="#5a5a5a" stroke="none" stroke-width="1" />
<rect x="351" y="302" width="17" height="17" fill="#c3c3c3" />
<rect x="352" y="303" width="15" height="15" fill="url(#fbtn)"/>
<path d="M355.5 309 L363.5 309 L359.5 313.2 Z" fill="#5a5a5a" stroke="none" stroke-width="1" />
<text x="40.52" y="316" font-size="13" fill="#fff" font-weight="bold" textLength="49.86" lengthAdjust="spacingAndGlyphs" >Country</text>
<text x="118.52" y="316" font-size="13" fill="#fff" font-weight="bold" textLength="30.16" lengthAdjust="spacingAndGlyphs" >Fruit</text>
<text x="176.52" y="316" font-size="13" fill="#fff" font-weight="bold" textLength="47.96" lengthAdjust="spacingAndGlyphs" >Vehicle</text>
<text x="246.52" y="316" font-size="13" fill="#fff" font-weight="bold" textLength="34.06" lengthAdjust="spacingAndGlyphs" >Color</text>
<text x="302.12" y="316" font-size="13" fill="#fff" font-weight="bold" textLength="39.56" lengthAdjust="spacingAndGlyphs" >Shape</text>
<text x="40.52" y="335.6" font-size="13" fill="#000" textLength="25.76" lengthAdjust="spacingAndGlyphs" >USA</text>
<text x="118.52" y="335.6" font-size="13" fill="#000" textLength="37.56" lengthAdjust="spacingAndGlyphs" >Apple</text>
<text x="176.52" y="335.6" font-size="13" fill="#000" textLength="21.06" lengthAdjust="spacingAndGlyphs" >Car</text>
<text x="246.52" y="335.6" font-size="13" fill="#000" textLength="38.66" lengthAdjust="spacingAndGlyphs" >Green</text>
<text x="302.12" y="335.6" font-size="13" fill="#000" textLength="29.16" lengthAdjust="spacingAndGlyphs" >Oval</text>
<text x="40.52" y="355.6" font-size="13" fill="#000" textLength="17.36" lengthAdjust="spacingAndGlyphs" >UK</text>
<text x="118.52" y="355.6" font-size="13" fill="#000" textLength="28.86" lengthAdjust="spacingAndGlyphs" >Pear</text>
<text x="176.52" y="355.6" font-size="13" fill="#000" textLength="33.86" lengthAdjust="spacingAndGlyphs" >Truck</text>
<text x="246.52" y="355.6" font-size="13" fill="#000" textLength="45.76" lengthAdjust="spacingAndGlyphs" >Orange</text>
<text x="302.12" y="355.6" font-size="13" fill="#000" textLength="36.46" lengthAdjust="spacingAndGlyphs" >Circle</text>
<text x="40.52" y="375.6" font-size="13" fill="#000" textLength="35.36" lengthAdjust="spacingAndGlyphs" >China</text>
<text x="118.52" y="375.6" font-size="13" fill="#000" textLength="52.06" lengthAdjust="spacingAndGlyphs" >Coconut</text>
<text x="176.52" y="375.6" font-size="13" fill="#000" textLength="22.76" lengthAdjust="spacingAndGlyphs" >Bus</text>
<text x="246.52" y="375.6" font-size="13" fill="#000" textLength="41.46" lengthAdjust="spacingAndGlyphs" >Purple</text>
<text x="302.12" y="375.6" font-size="13" fill="#000" textLength="43.96" lengthAdjust="spacingAndGlyphs" >Square</text>
<text x="40.52" y="395.6" font-size="13" fill="#000" textLength="31.56" lengthAdjust="spacingAndGlyphs" >India</text>
<text x="118.52" y="395.6" font-size="13" fill="#000" textLength="45.96" lengthAdjust="spacingAndGlyphs" >Banana</text>
<text x="176.52" y="395.6" font-size="13" fill="#000" textLength="47.96" lengthAdjust="spacingAndGlyphs" >Scooter</text>
<text x="246.52" y="395.6" font-size="13" fill="#000" textLength="42.36" lengthAdjust="spacingAndGlyphs" >Yellow</text>
<text x="302.12" y="395.6" font-size="13" fill="#000" textLength="62.06" lengthAdjust="spacingAndGlyphs" >Rectangle</text>
<text x="40.52" y="415.6" font-size="13" fill="#000" textLength="52.46" lengthAdjust="spacingAndGlyphs" >Pakistan</text>
<text x="118.52" y="415.6" font-size="13" fill="#000" textLength="42.76" lengthAdjust="spacingAndGlyphs" >Mango</text>
<text x="176.52" y="415.6" font-size="13" fill="#000" textLength="24.56" lengthAdjust="spacingAndGlyphs" >Van</text>
<text x="246.52" y="415.6" font-size="13" fill="#000" textLength="28.46" lengthAdjust="spacingAndGlyphs" >Blue</text>
<text x="302.12" y="415.6" font-size="13" fill="#000" textLength="26.76" lengthAdjust="spacingAndGlyphs" >Line</text>
<text x="40.52" y="435.6" font-size="13" fill="#000" textLength="71.56" lengthAdjust="spacingAndGlyphs" >Bangladesh</text>
<text x="118.52" y="435.6" font-size="13" fill="#000" textLength="46.16" lengthAdjust="spacingAndGlyphs" >Apricot</text>
<text x="176.52" y="435.6" font-size="13" fill="#000" textLength="53.56" lengthAdjust="spacingAndGlyphs" >Airplane</text>
<text x="246.52" y="435.6" font-size="13" fill="#000" textLength="32.56" lengthAdjust="spacingAndGlyphs" >Black</text>
<text x="302.12" y="435.6" font-size="13" fill="#000" textLength="25.76" lengthAdjust="spacingAndGlyphs" >Star</text>
<text x="40.52" y="455.6" font-size="13" fill="#000" textLength="24.26" lengthAdjust="spacingAndGlyphs" >Iran</text>
<text x="118.52" y="455.6" font-size="13" fill="#000" textLength="49.66" lengthAdjust="spacingAndGlyphs" >Almond</text>
<text x="176.52" y="455.6" font-size="13" fill="#000" textLength="43.66" lengthAdjust="spacingAndGlyphs" >Bicycle</text>
<text x="246.52" y="455.6" font-size="13" fill="#000" textLength="24.36" lengthAdjust="spacingAndGlyphs" >Red</text>
<text x="302.12" y="455.6" font-size="13" fill="#000" textLength="24.26" lengthAdjust="spacingAndGlyphs" >Sun</text>
<rect x="300" y="320" width="69" height="140" fill="none" stroke="#217346" stroke-width="2"/>
<rect x="365" y="456" width="8" height="8" fill="#fff" />
<rect x="366" y="457" width="6" height="6" fill="#217346" />
<rect x="37" y="320" width="2" height="141" fill="#217346" />
<rect x="300" y="299" width="69" height="2" fill="#217346" />
<rect x="512" y="281" width="305" height="545" fill="#e6e6e6" />
<rect x="511" y="283" width="1" height="541" fill="#c6c6c6" />
<text x="524.0" y="314.8" font-size="20" fill="#217346" textLength="110.4" lengthAdjust="spacingAndGlyphs" stroke="#e6e6e6" stroke-width="0.45">XML Source</text>
<path d="M777 301.5 L786 301.5 L781.5 306.5 Z" fill="#666" stroke="none" stroke-width="1" />
<path d="M795 300 L804 309 M804 300 L795 309" fill="none" stroke="#666" stroke-width="2" />
<text x="524.53" y="338.9" font-size="11.2" fill="#444" textLength="145.84" lengthAdjust="spacingAndGlyphs" >XML maps in this workbook:</text>
<rect x="525" y="344" width="278" height="22" fill="#ababab" />
<rect x="526" y="345" width="276" height="20" fill="#fff" />
<rect x="786" y="345" width="1" height="20" fill="#ababab" />
<path d="M791 353 L798 353 L794.5 357 Z" fill="#444" stroke="none" stroke-width="1" />
<text x="529.01" y="359.5" font-size="11.5" fill="#444" textLength="75.38" lengthAdjust="spacingAndGlyphs" >MiscData_Map</text>
<rect x="525" y="369" width="278" height="289" fill="#828282" />
<rect x="526" y="370" width="276" height="287" fill="#fff" />
<rect x="533.5" y="376.5" width="8" height="8" rx="1" fill="url(#mbox)" stroke="#9a9a9a" stroke-width="1"/>
<rect x="535" y="380" width="5" height="1" fill="#3c5bb0" />
<rect x="543" y="380" width="1" height="1" fill="#7a7a7a" />
<rect x="545" y="380" width="1" height="1" fill="#7a7a7a" />
<rect x="547" y="380" width="1" height="1" fill="#7a7a7a" />
<path d="M548.5 375.5 L553.5 375.5 L555 377 L560.5 377 L560.5 384.5 L548.5 384.5 Z" fill="#f3d27a" stroke="#b59a5a" stroke-width="1" />
<path d="M550.5 379 L563.5 379 L560.5 385 L548.5 385 Z" fill="#f0b93a" stroke="#9b7a30" stroke-width="0.8" />
<text x="559.7" y="383" font-size="16" fill="#e8231f" font-weight="bold" text-anchor="middle" >*</text>
<text x="568.78" y="382.6" font-size="12" fill="#000" textLength="49.24" lengthAdjust="spacingAndGlyphs" >MiscData</text>
<rect x="556" y="388" width="1" height="1" fill="#7a7a7a" />
<rect x="552.5" y="395.5" width="8" height="8" rx="1" fill="url(#mbox)" stroke="#9a9a9a" stroke-width="1"/>
<rect x="554" y="399" width="5" height="1" fill="#3c5bb0" />
<rect x="562" y="398" width="1" height="1" fill="#7a7a7a" />
<rect x="564" y="398" width="1" height="1" fill="#7a7a7a" />
<rect x="566" y="398" width="1" height="1" fill="#7a7a7a" />
<path d="M567.5 393.5 L572.5 393.5 L574 395 L579.5 395 L579.5 402.5 L567.5 402.5 Z" fill="#f3d27a" stroke="#b59a5a" stroke-width="1" />
<path d="M569.5 397 L582.5 397 L579.5 403 L567.5 403 Z" fill="#f0b93a" stroke="#9b7a30" stroke-width="0.8" />
<rect x="571" y="398" width="8" height="7" fill="#3a6fd1" rx="1"/>
<path d="M572.5 400 L577.5 400 L575 403 Z" fill="#fff" stroke="none" stroke-width="1" />
<text x="587.98" y="400.5" font-size="12" fill="#000" textLength="20.24" lengthAdjust="spacingAndGlyphs" >row</text>
<rect x="575" y="404" width="1" height="1" fill="#7a7a7a" />
<rect x="575" y="406" width="1" height="1" fill="#7a7a7a" />
<rect x="575" y="408" width="1" height="1" fill="#7a7a7a" />
<rect x="575" y="410" width="1" height="1" fill="#7a7a7a" />
<rect x="575" y="412" width="1" height="1" fill="#7a7a7a" />
<rect x="575" y="414" width="1" height="1" fill="#7a7a7a" />
<rect x="575" y="416" width="1" height="1" fill="#7a7a7a" />
<rect x="575" y="418" width="1" height="1" fill="#7a7a7a" />
<rect x="575" y="420" width="1" height="1" fill="#7a7a7a" />
<rect x="575" y="422" width="1" height="1" fill="#7a7a7a" />
<rect x="575" y="424" width="1" height="1" fill="#7a7a7a" />
<rect x="575" y="426" width="1" height="1" fill="#7a7a7a" />
<rect x="575" y="428" width="1" height="1" fill="#7a7a7a" />
<rect x="575" y="430" width="1" height="1" fill="#7a7a7a" />
<rect x="575" y="432" width="1" height="1" fill="#7a7a7a" />
<rect x="575" y="434" width="1" height="1" fill="#7a7a7a" />
<rect x="575" y="436" width="1" height="1" fill="#7a7a7a" />
<rect x="575" y="438" width="1" height="1" fill="#7a7a7a" />
<rect x="575" y="440" width="1" height="1" fill="#7a7a7a" />
<rect x="575" y="442" width="1" height="1" fill="#7a7a7a" />
<rect x="575" y="444" width="1" height="1" fill="#7a7a7a" />
<rect x="575" y="446" width="1" height="1" fill="#7a7a7a" />
<rect x="575" y="448" width="1" height="1" fill="#7a7a7a" />
<rect x="575" y="450" width="1" height="1" fill="#7a7a7a" />
<rect x="575" y="452" width="1" height="1" fill="#7a7a7a" />
<rect x="575" y="454" width="1" height="1" fill="#7a7a7a" />
<rect x="575" y="456" width="1" height="1" fill="#7a7a7a" />
<rect x="575" y="458" width="1" height="1" fill="#7a7a7a" />
<rect x="575" y="460" width="1" height="1" fill="#7a7a7a" />
<rect x="575" y="462" width="1" height="1" fill="#7a7a7a" />
<rect x="575" y="464" width="1" height="1" fill="#7a7a7a" />
<rect x="575" y="466" width="1" height="1" fill="#7a7a7a" />
<rect x="575" y="468" width="1" height="1" fill="#7a7a7a" />
<rect x="575" y="470" width="1" height="1" fill="#7a7a7a" />
<rect x="575" y="472" width="1" height="1" fill="#7a7a7a" />
<rect x="575" y="474" width="1" height="1" fill="#7a7a7a" />
<rect x="575" y="476" width="1" height="1" fill="#7a7a7a" />
<rect x="575" y="478" width="1" height="1" fill="#7a7a7a" />
<rect x="575" y="480" width="1" height="1" fill="#7a7a7a" />
<rect x="575" y="482" width="1" height="1" fill="#7a7a7a" />
<rect x="575" y="484" width="1" height="1" fill="#7a7a7a" />
<rect x="575" y="486" width="1" height="1" fill="#7a7a7a" />
<rect x="575" y="488" width="1" height="1" fill="#7a7a7a" />
<rect x="577" y="416" width="1" height="1" fill="#7a7a7a" />
<rect x="579" y="416" width="1" height="1" fill="#7a7a7a" />
<rect x="581" y="416" width="1" height="1" fill="#7a7a7a" />
<rect x="583" y="416" width="1" height="1" fill="#7a7a7a" />
<rect x="585" y="416" width="1" height="1" fill="#7a7a7a" />
<path d="M590 409.5 H599.5 V420.5 H587.5 V412 Z" fill="#f4f6fb" stroke="#5d6e90" stroke-width="1" />
<rect x="588" y="420" width="12" height="1" fill="#42506e" />
<path d="M587.5 412.5 H590.5 V409.5" fill="none" stroke="#5d6e90" stroke-width="1" />
<rect x="592" y="411" width="6" height="1" fill="#8494bb" />
<rect x="592" y="413" width="6" height="1" fill="#8494bb" />
<rect x="589" y="415" width="9" height="1" fill="#7d8db5" />
<rect x="589" y="417" width="9" height="1" fill="#7d8db5" />
<text x="606.48" y="419" font-size="12" fill="#000" font-weight="bold" textLength="45.04" lengthAdjust="spacingAndGlyphs" >Country</text>
<rect x="577" y="434" width="1" height="1" fill="#7a7a7a" />
<rect x="579" y="434" width="1" height="1" fill="#7a7a7a" />
<rect x="581" y="434" width="1" height="1" fill="#7a7a7a" />
<rect x="583" y="434" width="1" height="1" fill="#7a7a7a" />
<rect x="585" y="434" width="1" height="1" fill="#7a7a7a" />
<path d="M590 427.5 H599.5 V438.5 H587.5 V430 Z" fill="#f4f6fb" stroke="#5d6e90" stroke-width="1" />
<rect x="588" y="438" width="12" height="1" fill="#42506e" />
<path d="M587.5 430.5 H590.5 V427.5" fill="none" stroke="#5d6e90" stroke-width="1" />
<rect x="592" y="429" width="6" height="1" fill="#8494bb" />
<rect x="592" y="431" width="6" height="1" fill="#8494bb" />
<rect x="589" y="433" width="9" height="1" fill="#7d8db5" />
<rect x="589" y="435" width="9" height="1" fill="#7d8db5" />
<text x="606.48" y="437" font-size="12" fill="#000" font-weight="bold" textLength="26.94" lengthAdjust="spacingAndGlyphs" >Fruit</text>
<rect x="577" y="452" width="1" height="1" fill="#7a7a7a" />
<rect x="579" y="452" width="1" height="1" fill="#7a7a7a" />
<rect x="581" y="452" width="1" height="1" fill="#7a7a7a" />
<rect x="583" y="452" width="1" height="1" fill="#7a7a7a" />
<rect x="585" y="452" width="1" height="1" fill="#7a7a7a" />
<path d="M590 445.5 H599.5 V456.5 H587.5 V448 Z" fill="#f4f6fb" stroke="#5d6e90" stroke-width="1" />
<rect x="588" y="456" width="12" height="1" fill="#42506e" />
<path d="M587.5 448.5 H590.5 V445.5" fill="none" stroke="#5d6e90" stroke-width="1" />
<rect x="592" y="447" width="6" height="1" fill="#8494bb" />
<rect x="592" y="449" width="6" height="1" fill="#8494bb" />
<rect x="589" y="451" width="9" height="1" fill="#7d8db5" />
<rect x="589" y="453" width="9" height="1" fill="#7d8db5" />
<text x="606.48" y="455" font-size="12" fill="#000" font-weight="bold" textLength="42.04" lengthAdjust="spacingAndGlyphs" >Vehicle</text>
<rect x="577" y="470" width="1" height="1" fill="#7a7a7a" />
<rect x="579" y="470" width="1" height="1" fill="#7a7a7a" />
<rect x="581" y="470" width="1" height="1" fill="#7a7a7a" />
<rect x="583" y="470" width="1" height="1" fill="#7a7a7a" />
<rect x="585" y="470" width="1" height="1" fill="#7a7a7a" />
<path d="M590 463.5 H599.5 V474.5 H587.5 V466 Z" fill="#f4f6fb" stroke="#5d6e90" stroke-width="1" />
<rect x="588" y="474" width="12" height="1" fill="#42506e" />
<path d="M587.5 466.5 H590.5 V463.5" fill="none" stroke="#5d6e90" stroke-width="1" />
<rect x="592" y="465" width="6" height="1" fill="#8494bb" />
<rect x="592" y="467" width="6" height="1" fill="#8494bb" />
<rect x="589" y="469" width="9" height="1" fill="#7d8db5" />
<rect x="589" y="471" width="9" height="1" fill="#7d8db5" />
<text x="606.48" y="473" font-size="12" fill="#000" font-weight="bold" textLength="29.94" lengthAdjust="spacingAndGlyphs" >Color</text>
<rect x="577" y="488" width="1" height="1" fill="#7a7a7a" />
<rect x="579" y="488" width="1" height="1" fill="#7a7a7a" />
<rect x="581" y="488" width="1" height="1" fill="#7a7a7a" />
<rect x="583" y="488" width="1" height="1" fill="#7a7a7a" />
<rect x="585" y="488" width="1" height="1" fill="#7a7a7a" />
<path d="M590 481.5 H599.5 V492.5 H587.5 V484 Z" fill="#f4f6fb" stroke="#5d6e90" stroke-width="1" />
<rect x="588" y="492" width="12" height="1" fill="#42506e" />
<path d="M587.5 484.5 H590.5 V481.5" fill="none" stroke="#5d6e90" stroke-width="1" />
<rect x="592" y="483" width="6" height="1" fill="#8494bb" />
<rect x="592" y="485" width="6" height="1" fill="#8494bb" />
<rect x="589" y="487" width="9" height="1" fill="#7d8db5" />
<rect x="589" y="489" width="9" height="1" fill="#7d8db5" />
<rect x="605" y="478" width="38" height="17" fill="#3399ff" />
<text x="606.78" y="490.5" font-size="12" fill="#fff" font-weight="bold" textLength="34.64" lengthAdjust="spacingAndGlyphs" >Shape</text>
<text x="524.83" y="672" font-size="11.2" fill="#3b3b3b" textLength="265.74" lengthAdjust="spacingAndGlyphs" >To map repeating elements, drag the elements from</text>
<text x="524.83" y="684.9" font-size="11.2" fill="#3b3b3b" textLength="277.54" lengthAdjust="spacingAndGlyphs" >the tree onto the worksheet where you want the data</text>
<text x="524.83" y="697.8" font-size="11.2" fill="#3b3b3b" textLength="104.04" lengthAdjust="spacingAndGlyphs" >headings to appear.</text>
<text x="524.83" y="724" font-size="11.2" fill="#3b3b3b" textLength="263.24" lengthAdjust="spacingAndGlyphs" >To import XML data, right click an XML mapped cell,</text>
<text x="524.83" y="736.9" font-size="11.2" fill="#3b3b3b" textLength="184.14" lengthAdjust="spacingAndGlyphs" >point to XML, and then click Import.</text>
<rect x="525" y="742" width="67" height="23" fill="#adadad" />
<rect x="526" y="743" width="65" height="21" fill="#fdfdfd" />
<text x="529.81" y="757.6" font-size="11.5" fill="#3b3b3b" textLength="42.38" lengthAdjust="spacingAndGlyphs" >Options</text>
<path d="M578 752.5 L585 752.5 L581.5 756.5 Z" fill="#444" stroke="none" stroke-width="1" />
<rect x="601" y="742" width="79" height="23" fill="#adadad" />
<rect x="602" y="743" width="77" height="21" fill="#fdfdfd" />
<text x="609.11" y="757.6" font-size="11.5" fill="#3b3b3b" textLength="61.78" lengthAdjust="spacingAndGlyphs" >XML Maps...</text>
<text x="524.81" y="780.9" font-size="11.5" fill="#2e5a9c" textLength="118.08" lengthAdjust="spacingAndGlyphs" >Verify Map for Export...</text>
<rect x="525" y="787" width="278" height="1" fill="#c8c8c8" />
<circle cx="533" cy="802.3" r="8" fill="#3b73b9"/>
<text x="533" y="806.8" font-size="13" fill="#fff" font-weight="bold" text-anchor="middle" >?</text>
<text x="546.61" y="805.7" font-size="11.5" fill="#2e5a9c" textLength="111.78" lengthAdjust="spacingAndGlyphs" >Tips for mapping XML</text>
<rect x="493" y="283" width="15" height="515" fill="#e6e6e6" />
<rect x="493" y="283" width="15" height="15" fill="#ababab" />
<rect x="494" y="284" width="13" height="13" fill="#fff" />
<path d="M497 293 L504 293 L500.5 289 Z" fill="#606060" stroke="none" stroke-width="1" />
<rect x="493" y="298" width="15" height="465" fill="#ababab" />
<rect x="494" y="299" width="13" height="463" fill="#fff" />
<rect x="493" y="763" width="15" height="21" fill="#dadada" />
<rect x="493" y="784" width="15" height="15" fill="#ababab" />
<rect x="494" y="785" width="13" height="13" fill="#fff" />
<path d="M497 788.5 L504 788.5 L500.5 792.5 Z" fill="#606060" stroke="none" stroke-width="1" />
<rect x="13" y="799" width="498" height="27" fill="#e6e6e6" />
<rect x="13" y="798" width="477" height="1" fill="#9b9b9b" />
<path d="M44 807.5 L44 815.5 L40 811.5 Z" fill="#c4c4c4" stroke="none" stroke-width="1" />
<path d="M69 807.5 L69 815.5 L73 811.5 Z" fill="#c4c4c4" stroke="none" stroke-width="1" />
<rect x="113" y="798" width="65" height="24" fill="#fff" />
<rect x="113" y="798" width="1" height="24" fill="#ababab" />
<rect x="177" y="798" width="1" height="24" fill="#ababab" />
<rect x="113" y="821" width="65" height="2" fill="#217346" />
<text x="124.25" y="815.9" font-size="12.5" fill="#217346" font-weight="bold" textLength="42.3" lengthAdjust="spacingAndGlyphs" >Sheet1</text>
<circle cx="218.8" cy="811.8" r="7.2" fill="none" stroke="#777" stroke-width="1.3"/>
<rect x="214" y="811" width="10" height="2" fill="#777" />
<rect x="218" y="807" width="2" height="10" fill="#777" />
<rect x="312" y="805" width="2" height="2" fill="#a0a0a0" />
<rect x="312" y="810" width="2" height="2" fill="#a0a0a0" />
<rect x="312" y="815" width="2" height="2" fill="#a0a0a0" />
<rect x="329" y="805" width="161" height="15" fill="#ababab" />
<rect x="330" y="806" width="159" height="13" fill="#dadada" />
<rect x="330" y="806" width="14" height="13" fill="#fff" />
<rect x="344" y="805" width="1" height="15" fill="#ababab" />
<rect x="345" y="806" width="113" height="13" fill="#fff" />
<rect x="458" y="805" width="1" height="15" fill="#ababab" />
<rect x="474" y="805" width="1" height="15" fill="#ababab" />
<rect x="475" y="806" width="14" height="13" fill="#fff" />
<path d="M339.5 808.5 L339.5 815.5 L335.5 812 Z" fill="#606060" stroke="none" stroke-width="1" />
<path d="M480 808.5 L480 815.5 L484 812 Z" fill="#606060" stroke="none" stroke-width="1" />
<rect x="13" y="826" width="804" height="1" fill="#c6c6c6" />
<rect x="13" y="827" width="804" height="21" fill="#f1f1f1" />
<text x="19.81" y="841" font-size="11.5" fill="#444" textLength="32.18" lengthAdjust="spacingAndGlyphs" >Ready</text>
<rect x="72" y="833" width="12" height="10" fill="#7a7a7a" />
<rect x="73" y="836" width="10" height="6" fill="#f1f1f1" />
<rect x="78" y="831" width="6" height="5" fill="#7a7a7a" />
<rect x="75" y="837.0" width="2" height="1" fill="#7a7a7a" />
<rect x="78" y="837.0" width="2" height="1" fill="#7a7a7a" />
<rect x="81" y="837.0" width="2" height="1" fill="#7a7a7a" />
<rect x="75" y="839.5" width="2" height="1" fill="#7a7a7a" />
<rect x="78" y="839.5" width="2" height="1" fill="#7a7a7a" />
<rect x="81" y="839.5" width="2" height="1" fill="#7a7a7a" />
<circle cx="75" cy="833" r="3.3" fill="#7a7a7a"/>
<text x="444.91" y="840.8" font-size="11.5" fill="#444" textLength="43.98" lengthAdjust="spacingAndGlyphs" >Count: 7</text>
<rect x="514" y="827" width="38" height="21" fill="#c6c6c6" />
<rect x="526" y="830" width="13" height="13" fill="#7a7a7a" />
<rect x="527" y="831" width="3" height="3" fill="#c6c6c6" />
<rect x="531" y="831" width="3" height="3" fill="#c6c6c6" />
<rect x="535" y="831" width="3" height="3" fill="#c6c6c6" />
<rect x="527" y="835" width="3" height="3" fill="#c6c6c6" />
<rect x="531" y="835" width="3" height="3" fill="#c6c6c6" />
<rect x="535" y="835" width="3" height="3" fill="#c6c6c6" />
<rect x="527" y="839" width="3" height="3" fill="#c6c6c6" />
<rect x="531" y="839" width="3" height="3" fill="#c6c6c6" />
<rect x="535" y="839" width="3" height="3" fill="#c6c6c6" />
<rect x="564" y="830" width="14" height="13" fill="#6e6e6e" />
<rect x="565" y="831" width="12" height="11" fill="#f1f1f1" />
<rect x="567" y="832" width="8" height="9" fill="#6e6e6e" />
<rect x="568" y="833" width="6" height="7" fill="#f1f1f1" />
<rect x="569" y="834" width="4" height="1" fill="#6e6e6e" />
<rect x="569" y="836" width="4" height="1" fill="#6e6e6e" />
<rect x="569" y="838" width="4" height="1" fill="#6e6e6e" />
<rect x="602" y="830" width="14" height="13" fill="#6e6e6e" />
<rect x="603" y="831" width="12" height="11" fill="#f1f1f1" />
<rect x="602" y="837" width="9" height="1" fill="#6e6e6e" />
<rect x="606" y="830" width="1" height="8" fill="#6e6e6e" />
<rect x="610" y="830" width="1" height="8" fill="#6e6e6e" />
<rect x="633" y="836" width="6" height="2" fill="#555" />
<rect x="643" y="836" width="100" height="1" fill="#a0a0a0" />
<rect x="691" y="831" width="5" height="11" fill="#606060" />
<rect x="747" y="836" width="9" height="2" fill="#555" />
<rect x="750.5" y="832" width="2" height="9" fill="#555" />
<text x="769.21" y="840.6" font-size="11.5" fill="#444" textLength="28.18" lengthAdjust="spacingAndGlyphs" >100%</text>
<rect x="12" y="142" width="1" height="707" fill="#217346" />
<rect x="817" y="142" width="1" height="707" fill="#217346" />
<rect x="12" y="848" width="806" height="1" fill="#217346" />
<text x="371" y="34" font-size="18" fill="#ff0000" textLength="448" lengthAdjust="spacingAndGlyphs">Here <tspan fill="#92d050">MiscData</tspan> is the Root Element Name of Xml Map.</text>
<rect x="513" y="358" width="223" height="37" fill="none" stroke="#ed1c24" stroke-width="5" transform="translate(2.5 2.5) scale(1)" style="display:none"/>
<rect x="513" y="358" width="223" height="5" fill="#ed1c24" />
<rect x="513" y="390" width="223" height="5" fill="#ed1c24" />
<rect x="513" y="358" width="5" height="37" fill="#ed1c24" />
<rect x="731" y="358" width="5" height="37" fill="#ed1c24" />
<rect x="671" y="35" width="5" height="326" rx="2.5" fill="#ed1c24"/>
</svg></body></html>
